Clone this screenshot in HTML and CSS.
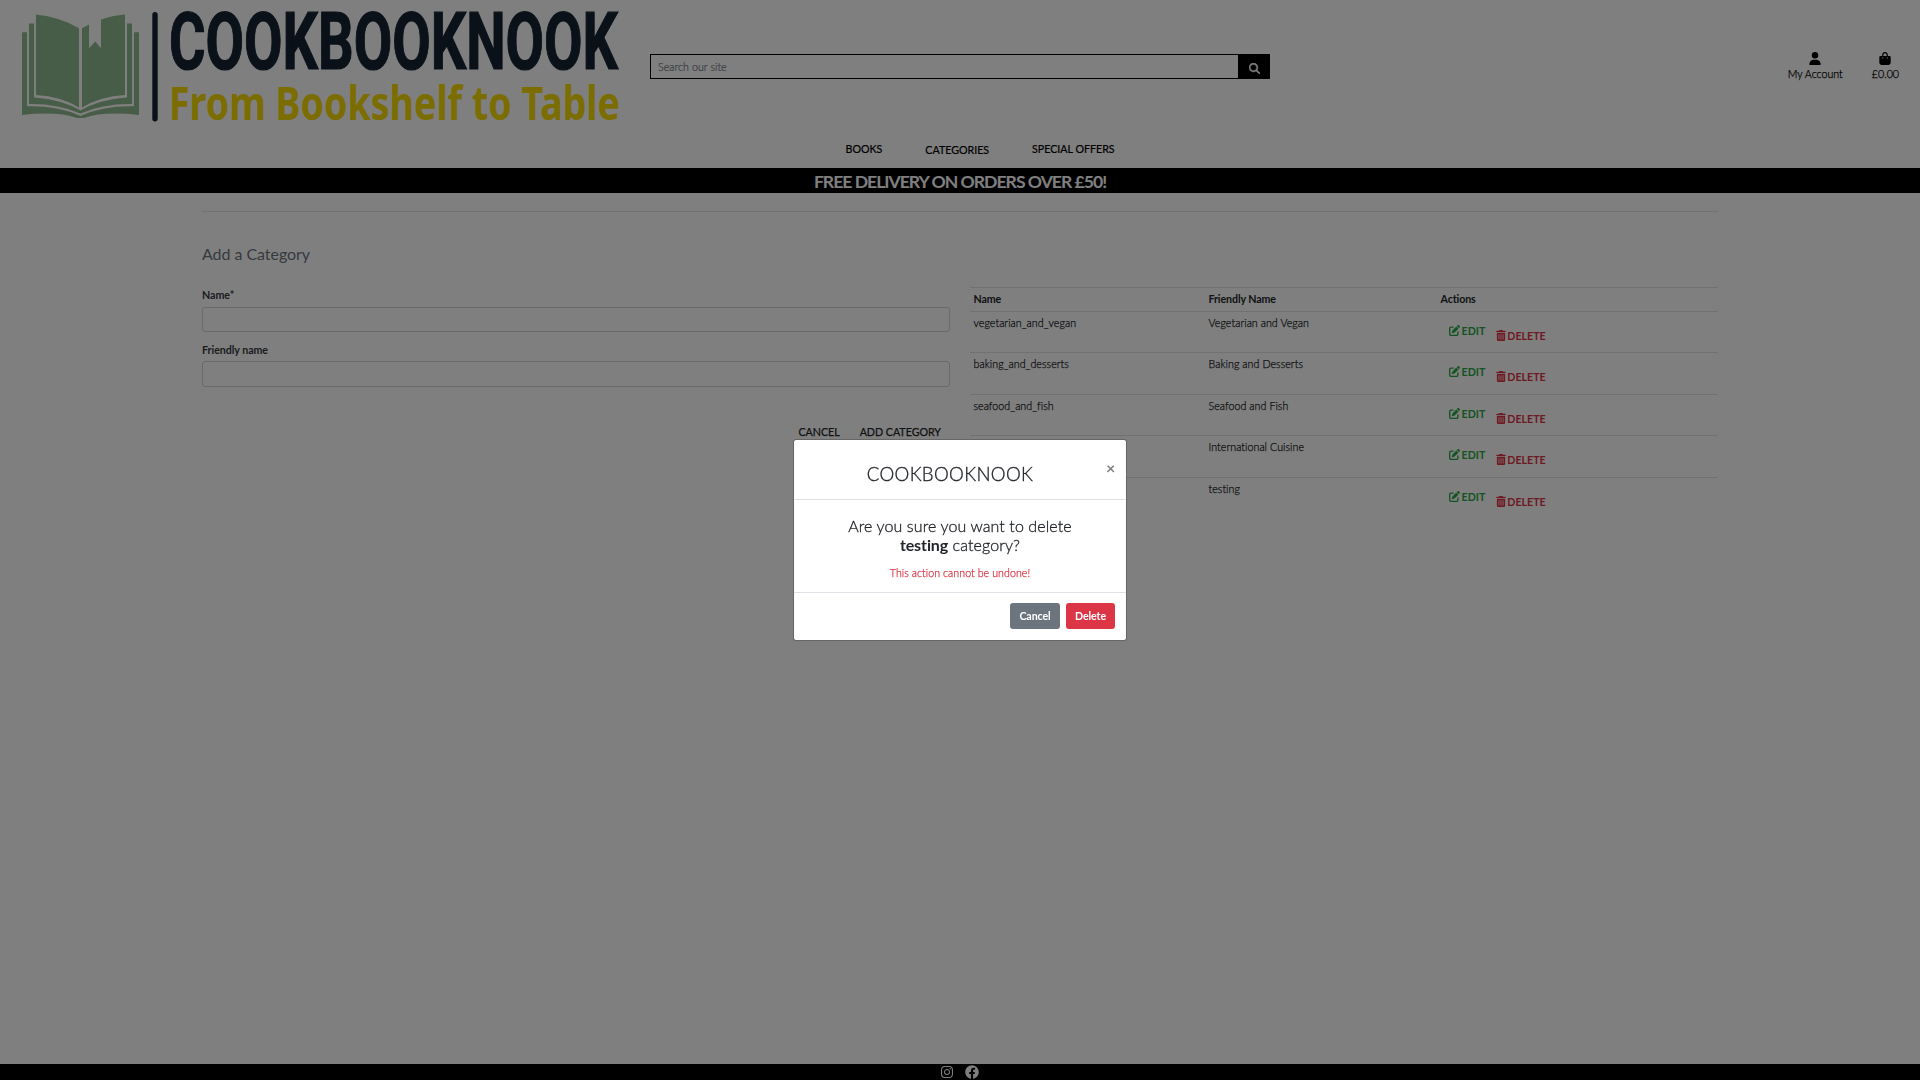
FILE: index.html
```html
<!DOCTYPE html>
<html lang="en">
<head>
<meta charset="utf-8">
<title>Cookbooknook</title>
<link rel="stylesheet" href="styles.css">
</head>
<body>
<svg class="sprite" aria-hidden="true">
  <symbol id="i-edit" viewBox="0 0 512 512"><path d="M471.600 21.700c-21.900-21.900-57.300-21.900-79.200 0L362.300 51.700l97.900 97.900 30.100-30.100c21.900-21.900 21.900-57.300 0-79.200L471.600 21.700zm-299.200 220c-6.100 6.100-10.800 13.600-13.500 21.900l-29.600 88.800c-2.900 8.600-.6 18.100 5.800 24.600s15.900 8.700 24.600 5.800l88.800-29.600c8.200-2.700 15.700-7.400 21.900-13.500L437.700 172.300 339.700 74.300 172.400 241.700zM96 64C43 64 0 107 0 160V416c0 53 43 96 96 96H352c53 0 96-43 96-96V320c0-17.700-14.300-32-32-32s-32 14.300-32 32v96c0 17.700-14.300 32-32 32H96c-17.700 0-32-14.300-32-32V160c0-17.700 14.300-32 32-32h96c17.700 0 32-14.300 32-32s-14.300-32-32-32H96z"/></symbol>
  <symbol id="i-trash" viewBox="0 0 448 512"><path d="M135.200 17.700C140.600 6.800 151.700 0 163.800 0H284.200c12.100 0 23.200 6.800 28.600 17.700L320 32h96c17.700 0 32 14.300 32 32s-14.300 32-32 32H32C14.300 96 0 81.700 0 64S14.300 32 32 32h96l7.200-14.300zM32 128H416V448c0 35.300-28.700 64-64 64H96c-35.300 0-64-28.700-64-64V128zm96 64c-8.800 0-16 7.200-16 16V432c0 8.800 7.200 16 16 16s16-7.200 16-16V208c0-8.800-7.200-16-16-16zm96 0c-8.800 0-16 7.200-16 16V432c0 8.800 7.200 16 16 16s16-7.200 16-16V208c0-8.800-7.200-16-16-16zm96 0c-8.800 0-16 7.200-16 16V432c0 8.800 7.200 16 16 16s16-7.200 16-16V208c0-8.800-7.200-16-16-16z"/></symbol>
</svg>

<header class="header">
  <div class="header-top">
    <a class="brand">
      <svg width="640" height="134" viewBox="0 0 640 134">
        <g fill="#90ba90">
          <path d="M36 14.500Q60 17 79 28.200V107.500Q61 96.500 36 95Z"/>
          <path d="M82 28.200L89 24.600V48.300L95.300 41.500L101 48.300V19.600Q112 15.500 125 14.500V95Q100 96.500 82 107.500Z"/>
          <path d="M29 23.500H34V97.500Q62 99.500 80.500 110.500Q99 99.500 127 97.500V23.500H132V104Q103 103.500 80.500 113.500Q58 103.500 29 104Z"/>
          <path d="M22 32.300H27V106.300Q58 105.500 80.500 116Q103 105.500 134 106.300V32.300H139V115Q104 111 84 118H77Q57 111 22 115Z"/>
        </g>
        <rect x="152.300" y="12" width="5.400" height="109.500" rx="2.700" fill="#142232"/>
        <text class="brand-name" x="169" y="69" textLength="449" lengthAdjust="spacingAndGlyphs">COOKBOOKNOOK</text>
        <text class="brand-tag" x="169" y="120" textLength="451" lengthAdjust="spacingAndGlyphs">From Bookshelf to Table</text>
      </svg>
    </a>
    <form class="search">
      <input class="search-input" type="text" placeholder="Search our site">
      <button class="search-btn" type="button" aria-label="Search"><svg width="11" height="11" viewBox="0 0 512 512"><path fill="#fff" stroke="#fff" stroke-width="20" d="M416 208c0 45.900-14.900 88.300-40 122.700L502.600 457.400c12.500 12.500 12.500 32.800 0 45.300s-32.800 12.500-45.300 0L330.700 376c-34.400 25.200-76.800 40-122.700 40C93.100 416 0 322.900 0 208S93.100 0 208 0S416 93.100 416 208zM208 352a144 144 0 1 0 0-288 144 144 0 1 0 0 288z"/></svg></button>
    </form>
    <div class="account">
      <a class="account-item"><svg width="12" height="13" viewBox="0 0 448 512"><path d="M224 256A128 128 0 1 0 224 0a128 128 0 1 0 0 256zm-45.700 48C79.800 304 0 383.800 0 482.300C0 498.700 13.300 512 29.700 512H418.300c16.400 0 29.700-13.300 29.700-29.700C448 383.800 368.200 304 269.700 304H178.300z"/></svg><span>My Account</span></a>
      <a class="account-item"><svg width="12" height="13" viewBox="0 0 448 512"><path d="M160 112c0-35.300 28.700-64 64-64s64 28.700 64 64v48H160V112zm-48 48H48c-26.500 0-48 21.500-48 48V416c0 53 43 96 96 96H352c53 0 96-43 96-96V208c0-26.500-21.500-48-48-48H336V112C336 50.100 285.900 0 224 0S112 50.100 112 112v48zm24 48a24 24 0 1 1 0 48 24 24 0 1 1 0-48zm152 24a24 24 0 1 1 48 0 24 24 0 1 1 -48 0z"/></svg><span>£0.00</span></a>
    </div>
  </div>
  <nav class="nav">
    <a>BOOKS</a>
    <a class="nav-cats">CATEGORIES</a>
    <a>SPECIAL OFFERS</a>
  </nav>
</header>
<div class="banner"><h4>FREE DELIVERY ON ORDERS OVER £50!</h4></div>

<main class="container">
  <hr>
  <h5 class="page-title">Add a Category</h5>
  <div class="columns">
    <form class="form">
      <label>Name*</label>
      <input class="field" type="text">
      <label class="l-friendly">Friendly name</label>
      <input class="field field-friendly" type="text">
      <div class="form-actions"><a>CANCEL</a><a>ADD CATEGORY</a></div>
    </form>
    <div class="table">
      <div class="row head"><span>Name</span><span>Friendly Name</span><span>Actions</span></div>
      <div class="row"><span>vegetarian_and_vegan</span><span>Vegetarian and Vegan</span><div class="actions"><a class="edit"><svg width="11" height="11"><use href="#i-edit"/></svg>EDIT</a><a class="delete"><svg width="10" height="11"><use href="#i-trash"/></svg>DELETE</a></div></div>
      <div class="row"><span>baking_and_desserts</span><span>Baking and Desserts</span><div class="actions"><a class="edit"><svg width="11" height="11"><use href="#i-edit"/></svg>EDIT</a><a class="delete"><svg width="10" height="11"><use href="#i-trash"/></svg>DELETE</a></div></div>
      <div class="row"><span>seafood_and_fish</span><span>Seafood and Fish</span><div class="actions"><a class="edit"><svg width="11" height="11"><use href="#i-edit"/></svg>EDIT</a><a class="delete"><svg width="10" height="11"><use href="#i-trash"/></svg>DELETE</a></div></div>
      <div class="row"><span></span><span>International Cuisine</span><div class="actions"><a class="edit"><svg width="11" height="11"><use href="#i-edit"/></svg>EDIT</a><a class="delete"><svg width="10" height="11"><use href="#i-trash"/></svg>DELETE</a></div></div>
      <div class="row"><span></span><span>testing</span><div class="actions"><a class="edit"><svg width="11" height="11"><use href="#i-edit"/></svg>EDIT</a><a class="delete"><svg width="10" height="11"><use href="#i-trash"/></svg>DELETE</a></div></div>
    </div>
  </div>
</main>

<footer class="footer">
  <svg width="12" height="14" viewBox="0 0 448 512"><path fill="#fff" d="M224.100 141c-63.600 0-114.900 51.300-114.900 114.900s51.300 114.900 114.900 114.900S339 319.500 339 255.900 287.700 141 224.100 141zm0 189.600c-41.100 0-74.700-33.500-74.700-74.700s33.500-74.700 74.700-74.700 74.700 33.500 74.700 74.700-33.600 74.700-74.700 74.700zm146.400-194.300c0 14.900-12 26.800-26.800 26.800-14.900 0-26.800-12-26.800-26.800s12-26.800 26.800-26.800 26.800 12 26.800 26.800zm76.100 27.200c-1.700-35.900-9.900-67.700-36.200-93.900-26.200-26.200-58-34.400-93.900-36.200-37-2.100-147.900-2.100-184.900 0-35.800 1.700-67.600 9.900-93.900 36.100s-34.400 58-36.200 93.900c-2.100 37-2.100 147.900 0 184.900 1.700 35.900 9.900 67.700 36.200 93.900s58 34.400 93.900 36.200c37 2.100 147.900 2.100 184.900 0 35.900-1.700 67.700-9.900 93.900-36.200 26.200-26.200 34.400-58 36.200-93.900 2.100-37 2.100-147.800 0-184.800zM398.800 388c-7.800 19.600-22.900 34.700-42.600 42.600-29.500 11.700-99.500 9-132.100 9s-102.700 2.600-132.100-9c-19.600-7.800-34.700-22.900-42.600-42.600-11.700-29.500-9-99.500-9-132.100s-2.600-102.700 9-132.100c7.800-19.600 22.900-34.700 42.600-42.600 29.500-11.700 99.500-9 132.100-9s102.700-2.600 132.100 9c19.600 7.800 34.700 22.900 42.600 42.600 11.700 29.500 9 99.500 9 132.100s2.700 102.700-9 132.100z"/></svg>
  <svg width="14" height="14" viewBox="0 0 512 512"><path fill="#fff" d="M504 256C504 119 393 8 256 8S8 119 8 256c0 123.780 90.690 226.380 209.250 245V327.690h-63V256h63v-54.640c0-62.150 37-96.480 93.670-96.480 27.140 0 55.520 4.840 55.520 4.840v61h-31.280c-30.800 0-40.410 19.120-40.410 38.730V256h68.780l-11 71.690h-57.780V501C413.310 482.380 504 379.780 504 256z"/></svg>
</footer>

<div class="backdrop">
  <div class="modal">
    <div class="modal-header"><h3>COOKBOOKNOOK</h3><span class="close">×</span></div>
    <div class="modal-body">
      <p class="question">Are you sure you want to delete<br><strong>testing</strong> category?</p>
      <p class="warning">This action cannot be undone!</p>
    </div>
    <div class="modal-footer"><button class="btn btn-cancel" type="button">Cancel</button><button class="btn btn-delete" type="button">Delete</button></div>
  </div>
</div>
</body>
</html>
```
FILE: styles.css
```css
* { box-sizing: border-box; }
body {
  margin: 0;
  height: 1080px;
  display: flex;
  flex-direction: column;
  overflow: hidden;
  background: #fff;
  color: #000;
  font: 400 10.67px/16px Lato, sans-serif;
}
h3, h4, h5, p { margin: 0; }
.sprite { display: none; }

.header { height: 168px; }
.header-top { height: 134px; display: flex; }
.brand, .brand svg { display: block; }
.brand svg { overflow: visible; }
.brand-name { font: 700 80px Roboto, sans-serif; fill: #142232; stroke: #142232; stroke-width: 1.2px; }
.brand-tag { font: 700 47px "Noto Sans", sans-serif; fill: #f6da00; }

.search { display: flex; width: 620px; height: 25px; margin: 54px 0 0 10px; }
.search-input {
  width: 588px;
  padding: 0 7px;
  border: 1px solid #000;
  border-right: 0;
  background: #fff;
  font: 300 10.67px Lato, sans-serif;
  letter-spacing: .05px;
}
.search-input::placeholder { color: #6c757d; -webkit-text-stroke: .2px; }
.search-btn { width: 32px; padding: 3px 0 0; border: 0; background: #000; line-height: 0; }

.account { display: flex; margin: 52px 21px 0 auto; gap: 29px; }
.account-item { display: flex; flex-direction: column; align-items: center; }
.account-item span { line-height: 16px; margin-top: 1px; font-weight: 300; -webkit-text-stroke: .25px; }

.nav { display: flex; padding: 7px 0 0 845.500px; gap: 43px; -webkit-text-stroke: .2px; }
.nav-cats { padding-top: 1px; }

.banner { height: 25px; background: #000; color: #fff; text-align: center; }
.banner h4 { font-size: 17.6px; font-weight: 700; line-height: 27px; letter-spacing: -1px; }

.container { width: 1516px; margin: 0 auto; flex: 1; }
hr { margin: 18px 0 0; border: 0; border-top: 1px solid rgba(0, 0, 0, .1); }
.page-title { padding-top: 32px; font-size: 16px; font-weight: 400; line-height: 20px; color: #6c757d; letter-spacing: -.05px; }
.columns { display: flex; gap: 20px; padding-top: 23px; }
.form { width: 748px; display: flex; flex-direction: column; color: #343a40; font-weight: 700; }
label { line-height: 16px; margin-bottom: 4px; letter-spacing: -.05px; }
.l-friendly { margin-top: 10px; margin-bottom: 3px; }
.field { width: 748px; height: 25px; border: 1px solid #ced4da; border-radius: 3px; background: #fff; }
.field-friendly { height: 26px; }
.form-actions { display: flex; justify-content: flex-end; gap: 20px; padding: 37px 9px 0 0; font-weight: 400; color: #212529; -webkit-text-stroke: .25px; }

.table { width: 748px; color: #212529; }
.row { display: grid; grid-template-columns: 235px 232px 1fr; height: 41.4px; padding: 3px 3.500px 2px; border-top: 1px solid #dee2e6; }
.row > span { font-weight: 300; letter-spacing: .06px; -webkit-text-stroke: .25px; }
.row.head { height: 24px; padding-top: 2.500px; }
.row.head > span { font-weight: 700; letter-spacing: -.1px; -webkit-text-stroke: 0; }
.actions { display: flex; gap: 11px; padding: 8px 0 0 8px; font-weight: 700; }
.edit, .delete { display: flex; gap: 2px; }
.edit { color: #28a745; }
.edit svg { margin-top: 2px; }
.delete { gap: 1px; color: #dc3545; padding-top: 5px; }
.delete svg { margin-top: 2px; }
.actions svg { fill: currentColor; }

.footer { height: 16px; background: #000; display: flex; justify-content: center; align-items: center; gap: 12px; }

.backdrop { position: fixed; inset: 0; padding-top: 439px; background: rgba(0, 0, 0, .5); z-index: 10; }
.modal {
  width: 334px;
  height: 202px;
  margin: 0 auto;
  border: 1px solid rgba(0, 0, 0, .2);
  border-radius: 3px;
  background: #fff;
  background-clip: padding-box;
  color: #212529;
}
.modal-header { display: flex; height: 60px; border-bottom: 1px solid #dee2e6; }
.modal-header h3 { width: 312px; padding: 22px 0 0; text-align: center; font-size: 18.67px; font-weight: 300; line-height: 24px; letter-spacing: .35px; -webkit-text-stroke: .3px; }
.close { color: #7f7f7f; font: 700 16px/16px Lato, sans-serif; margin: 20px 0 0; }
.modal-body { height: 93px; padding-top: 16px; text-align: center; border-bottom: 1px solid #dee2e6; }
.question { font-size: 16px; font-weight: 300; line-height: 19px; letter-spacing: .1px; -webkit-text-stroke: .3px; }
.question strong { font-weight: 700; letter-spacing: -.1px; -webkit-text-stroke: 0; }
.warning { margin-top: 11px; color: #dc3545; font-weight: 300; letter-spacing: .05px; -webkit-text-stroke: .25px; }
.modal-footer { display: flex; justify-content: flex-end; gap: 6px; padding: 10px 11px 0 0; }
.btn { height: 26px; padding: 0 0 1px; border: 0; border-radius: 3px; color: #fff; font: 700 10.67px Lato, sans-serif; letter-spacing: -.1px; }
.btn-cancel { width: 50px; background: #6c757d; }
.btn-delete { width: 49px; background: #dc3545; }
```
